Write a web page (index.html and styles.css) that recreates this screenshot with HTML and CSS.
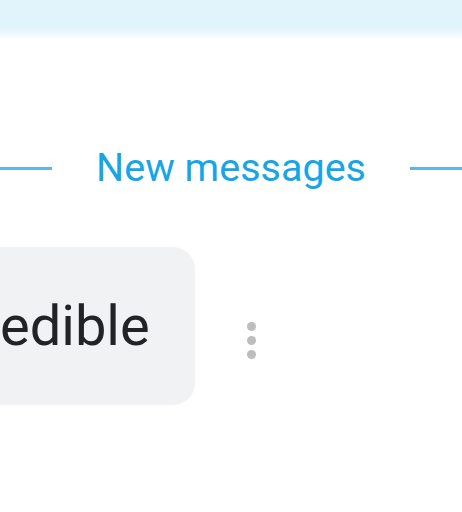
FILE: index.html
```html
<!DOCTYPE html>
<html lang="en">
<head>
<meta charset="utf-8">
<title>Chat</title>
<link rel="stylesheet" href="styles.css">
</head>
<body>
<div class="chat">
  <header class="topbar"></header>
  <div class="divider">
    <span class="divider-line"></span>
    <span class="divider-label">New messages</span>
    <span class="divider-line"></span>
  </div>
  <div class="message">
    <div class="bubble"><span class="bubble-text">edible</span></div>
    <button class="more" aria-label="More options">
      <span class="dot"></span><span class="dot"></span><span class="dot"></span>
    </button>
  </div>
</div>
</body>
</html>
```

FILE: styles.css
```css
html, body {
  margin: 0;
  padding: 0;
  background: #ffffff;
}

.chat {
  width: 462px;
  height: 512px;
  overflow: hidden;
  font-family: Roboto, "Noto Sans", Arial, sans-serif;
}

.topbar {
  height: 40px;
  background: linear-gradient(to bottom, #e1f3fb 0, #e1f3fb 28px, #ffffff 40px);
}

.divider {
  display: flex;
  align-items: center;
  margin-top: 100px;
  height: 56px;
  gap: 44px;
}

.divider-line {
  flex: 1;
  height: 3px;
  background: #64b4ec;
}

.divider-label {
  font-size: 39.5px;
  color: #16a6e6;
  line-height: 56px;
}

.message {
  display: flex;
  align-items: center;
  margin-top: 51px;
}

.bubble {
  background: #f1f2f4;
  border-radius: 0 22px 22px 0;
  height: 158px;
  display: flex;
  align-items: center;
  padding: 0 45px 0 0;
}

.bubble-text {
  font-size: 56px;
  color: #222326;
}

.more {
  border: 0;
  background: none;
  padding: 0;
  margin-left: 52px;
  margin-top: 28px;
  display: flex;
  flex-direction: column;
  gap: 5px;
}

.dot {
  width: 9px;
  height: 9px;
  border-radius: 50%;
  background: #bdbdbd;
}
```
